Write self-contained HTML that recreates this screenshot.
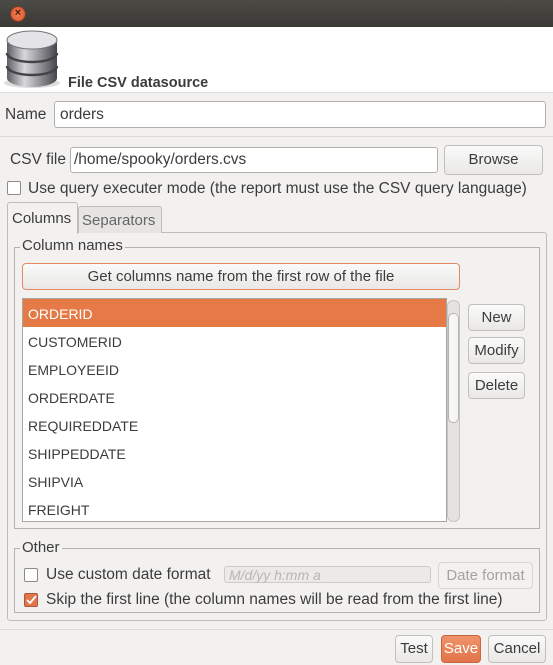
<!DOCTYPE html><html><head><style>
*{box-sizing:border-box;margin:0;padding:0}
body{width:553px;height:665px;background:#f2f1f0;font-family:"Liberation Sans",sans-serif;font-size:14px;color:#3c3c3c;position:relative;overflow:hidden}
.a{position:absolute}
.t{position:absolute;white-space:nowrap;line-height:16px}
.in{position:absolute;background:#fff;border:1px solid #b3b0ab;border-radius:3px}
.btn{position:absolute;border:1px solid #c3c0bb;border-radius:4px;background:linear-gradient(#fafafa,#e9e8e6);text-align:center;color:#3c3c3c;font-size:15px}
.cb{position:absolute;width:14px;height:14px;border:1px solid #8e8b86;border-radius:2px;background:#fff}
.grp{position:absolute;border:1px solid #b6b3ae}
.row{position:absolute;left:28px;font-size:14px;color:#3c3c3c}
</style></head><body>
<div class="a" style="left:0;top:0;width:553px;height:27px;background:linear-gradient(#4c4b46,#3a3935)"></div>
<div class="a" style="left:10px;top:6px;width:16px;height:16px;border-radius:50%;background:radial-gradient(#f0845a,#d9502a);border:1px solid #7a3a20;color:#4a1a0a;font-size:11px;line-height:13px;text-align:center;font-weight:bold">×</div>
<div class="a" style="left:0;top:27px;width:553px;height:66px;background:#fff;border-bottom:1px solid #ddd"></div>
<svg class="a" style="left:3px;top:29px" width="58" height="60" viewBox="0 0 58 60">
<defs><linearGradient id="g" x1="0" x2="1"><stop offset="0" stop-color="#5e5e64"/><stop offset=".35" stop-color="#d8d8dc"/><stop offset=".6" stop-color="#a0a0a6"/><stop offset="1" stop-color="#45454a"/></linearGradient></defs>
<ellipse cx="29" cy="54" rx="28" ry="5" fill="#bbb" opacity=".5"/>
<path d="M4 11v38c0 5 11 9 25 9s25-4 25-9V11z" fill="url(#g)"/>
<path d="M4 24c0 5 11 9 25 9s25-4 25-9M4 37c0 5 11 9 25 9s25-4 25-9" stroke="#444" stroke-width="2.5" fill="none"/>
<ellipse cx="29" cy="11" rx="25" ry="9" fill="#e4e4e8" stroke="#777"/>
</svg>
<div class="t" style="left:68px;top:75px;font-weight:bold;font-size:14.5px;color:#3c3c3c">File CSV datasource</div>
<div class="t" style="left:5px;top:107px;font-size:15.5px">Name</div>
<div class="in" style="left:54px;top:101px;width:492px;height:27px"><span class="t" style="left:5px;top:5px;font-size:15.5px">orders</span></div>
<div class="a" style="left:0;top:136px;width:553px;height:1px;background:#dcdad5"></div>
<div class="t" style="left:10px;top:152px;font-size:15.5px">CSV file</div>
<div class="in" style="left:70px;top:147px;width:368px;height:26px"><span class="t" style="left:3px;top:4px;font-size:15.5px">/home/spooky/orders.cvs</span></div>
<div class="btn" style="left:444px;top:145px;width:99px;height:30px;line-height:28px">Browse</div>
<div class="cb" style="left:7px;top:181px"></div>
<div class="t" style="left:28px;top:181px;font-size:15.5px">Use query executer mode (the report must use the CSV query language)</div>
<div class="a" style="left:7px;top:232px;width:540px;height:389px;border:1px solid #c0bdb8;border-radius:3px;background:#f2f1f0"></div>
<div class="a" style="left:78px;top:206px;width:84px;height:27px;border:1px solid #c0bdb8;border-bottom:none;background:#e6e5e3;border-radius:3px 3px 0 0"></div>
<div class="t" style="left:82px;top:213px;font-size:15px;color:#666">Separators</div>
<div class="a" style="left:7px;top:202px;width:71px;height:32px;border:1px solid #c0bdb8;border-bottom:none;background:#f2f1f0;border-radius:3px 3px 0 0"></div>
<div class="t" style="left:12px;top:211px;font-size:15px">Columns</div>
<div class="grp" style="left:14px;top:247px;width:526px;height:282px"></div>
<div class="t" style="left:20px;top:238px;font-size:15px;background:#f2f1f0;padding:0 2px">Column names</div>
<div class="btn" style="left:22px;top:263px;width:438px;height:27px;line-height:25px;border-color:#e38a62">Get columns name from the first row of the file</div>
<div class="a" style="left:22px;top:298px;width:425px;height:224px;background:#fff;border:1px solid #a9a6a1;overflow:hidden">
<div class="a" style="left:0;top:0;width:423px;height:28px;background:#e67a47"></div>
</div>
<div class="row t" style="top:306px;color:#fff">ORDERID</div>
<div class="row t" style="top:334px">CUSTOMERID</div>
<div class="row t" style="top:362px">EMPLOYEEID</div>
<div class="row t" style="top:390px">ORDERDATE</div>
<div class="row t" style="top:418px">REQUIREDDATE</div>
<div class="row t" style="top:446px">SHIPPEDDATE</div>
<div class="row t" style="top:474px">SHIPVIA</div>
<div class="row t" style="top:502px">FREIGHT</div>
<div class="a" style="left:447px;top:300px;width:13px;height:222px;border:1px solid #c9c6c1;border-radius:6px;background:#e4e3e1"></div>
<div class="a" style="left:448px;top:313px;width:11px;height:110px;border:1px solid #b5b2ad;border-radius:5px;background:#f6f6f5"></div>
<div class="btn" style="left:468px;top:304px;width:57px;height:27px;line-height:25px">New</div>
<div class="btn" style="left:468px;top:337px;width:57px;height:27px;line-height:25px">Modify</div>
<div class="btn" style="left:468px;top:372px;width:57px;height:27px;line-height:25px">Delete</div>
<div class="grp" style="left:14px;top:548px;width:526px;height:65px"></div>
<div class="t" style="left:20px;top:540px;font-size:15px;background:#f2f1f0;padding:0 2px">Other</div>
<div class="cb" style="left:24px;top:568px"></div>
<div class="t" style="left:46px;top:567px;font-size:15.5px">Use custom date format</div>
<div class="a" style="left:224px;top:566px;width:207px;height:17px;border:1px solid #cfccc7;border-radius:3px;background:#eceae8"><span class="t" style="left:4px;top:0;font-size:14px;color:#b8b6b3;font-style:italic">M/d/yy h:mm a</span></div>
<div class="btn" style="left:438px;top:562px;width:95px;height:27px;line-height:25px;color:#a5a3a0;background:#f2f1f0;border-color:#d8d6d2">Date format</div>
<div class="cb" style="left:24px;top:593px;background:#e0764a;border-color:#b0553a"></div>
<svg class="a" style="left:24px;top:593px" width="14" height="14"><path d="M3 7l3 3 6-7" stroke="#fff" stroke-width="1.8" fill="none"/></svg>
<div class="t" style="left:46px;top:592px;font-size:15.5px">Skip the first line (the column names will be read from the first line)</div>
<div class="a" style="left:0;top:629px;width:553px;height:1px;background:#dcdad5"></div>
<div class="btn" style="left:395px;top:635px;width:38px;height:28px;line-height:26px">Test</div>
<div class="btn" style="left:441px;top:635px;width:40px;height:28px;line-height:26px;background:linear-gradient(#f0936a,#e2744a);border-color:#c8643e;color:#fff">Save</div>
<div class="btn" style="left:488px;top:635px;width:58px;height:28px;line-height:26px">Cancel</div>
</body></html>
